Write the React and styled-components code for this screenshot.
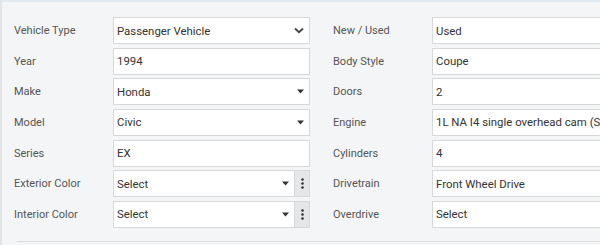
import React from 'react';
import styled, { createGlobalStyle } from 'styled-components';

const GlobalStyle = createGlobalStyle`
html, body {
  margin: 0;
  padding: 0;
  background: #f4f5f6;
  font-family: Roboto, "Liberation Sans", Arial, sans-serif;
  overflow: hidden;
}
`

const leftFields = [
    { label: 'Vehicle Type', value: 'Passenger Vehicle', kind: 'chevron' },
    { label: 'Year', value: '1994' },
    { label: 'Make', value: 'Honda', kind: 'caret' },
    { label: 'Model', value: 'Civic', kind: 'caret' },
    { label: 'Series', value: 'EX' },
    { label: 'Exterior Color', value: 'Select', kind: 'caret', menu: true },
    { label: 'Interior Color', value: 'Select', kind: 'caret', menu: true },
]

const rightFields = [
    { label: 'New / Used', value: 'Used' },
    { label: 'Body Style', value: 'Coupe' },
    { label: 'Doors', value: '2' },
    { label: 'Engine', value: '1L NA I4 single overhead cam (SOHC) 16V' },
    { label: 'Cylinders', value: '4' },
    { label: 'Drivetrain', value: 'Front Wheel Drive' },
    { label: 'Overdrive', value: 'Select' },
]

const Page = styled.div`
width: 600px;
height: 245px;
box-sizing: border-box;
border-top: 2px solid #e3ebf1;
border-left: 2px solid #e2e4e6;
padding: 15px 0 0 12px;
display: flex;
flex-direction: column;
overflow: hidden;
`
const Columns = styled.div`
display: flex;
gap: 23px;
`
const Column = styled.div`
display: flex;
flex-direction: column;
gap: 3.67px;
flex: 0 0 296px;
`
const Row = styled.div`
display: flex;
align-items: center;
height: 27px;
`
const Label = styled.div`
flex: 0 0 99px;
font-size: 11px;
color: #555;
`
const Field = styled.div`
flex: 0 0 197px;
height: 27px;
box-sizing: border-box;
display: flex;
align-items: stretch;
`
const Box = styled.div`
flex: 1;
min-width: 0;
background: #fff;
border: 1px solid #d6d8da;
display: flex;
align-items: center;
padding: 0 5px 0 3px;
font-size: 11.4px;
color: #333;
white-space: nowrap;
overflow: hidden;
`
const Value = styled.span`
flex: 1;
overflow: hidden;
`
const MenuButton = styled.div`
flex: 0 0 14px;
background: #e4e6e8;
border: 1px solid #d6d8da;
border-left: none;
display: flex;
align-items: center;
justify-content: center;
`
const Footer = styled.div`
margin: 13px 0 0 3px;
border-top: 1px solid #dcdee0;
`

const Chevron = () => (
    <svg width="10" height="7" viewBox="0 0 10 7">
        <path d="M1 1.5 L5 5.2 L9 1.5" fill="none" stroke="#444" strokeWidth="1.8" />
    </svg>
)

const Caret = () => (
    <svg width="7" height="5" viewBox="0 0 7 5">
        <path d="M0 0.5 H7 L3.5 4.5 Z" fill="#333" />
    </svg>
)

const Dots = () => (
    <svg width="3" height="11" viewBox="0 0 3 11">
        <circle cx="1.5" cy="1.5" r="1.3" fill="#333" />
        <circle cx="1.5" cy="5.5" r="1.3" fill="#333" />
        <circle cx="1.5" cy="9.5" r="1.3" fill="#333" />
    </svg>
)

const FieldRow = ({ label, value, kind, menu }) => (
    <Row>
        <Label>{label}</Label>
        <Field>
            <Box>
                <Value>{value}</Value>
                {kind === 'chevron' && <Chevron />}
                {kind === 'caret' && <Caret />}
            </Box>
            {menu && <MenuButton><Dots /></MenuButton>}
        </Field>
    </Row>
)

export default function App() {
    return (
        <Page>
            <GlobalStyle />
            <Columns>
                <Column>
                    {leftFields.map((f, i) => <FieldRow key={i} {...f} />)}
                </Column>
                <Column>
                    {rightFields.map((f, i) => <FieldRow key={i} {...f} />)}
                </Column>
            </Columns>
            <Footer />
        </Page>
    );
}
